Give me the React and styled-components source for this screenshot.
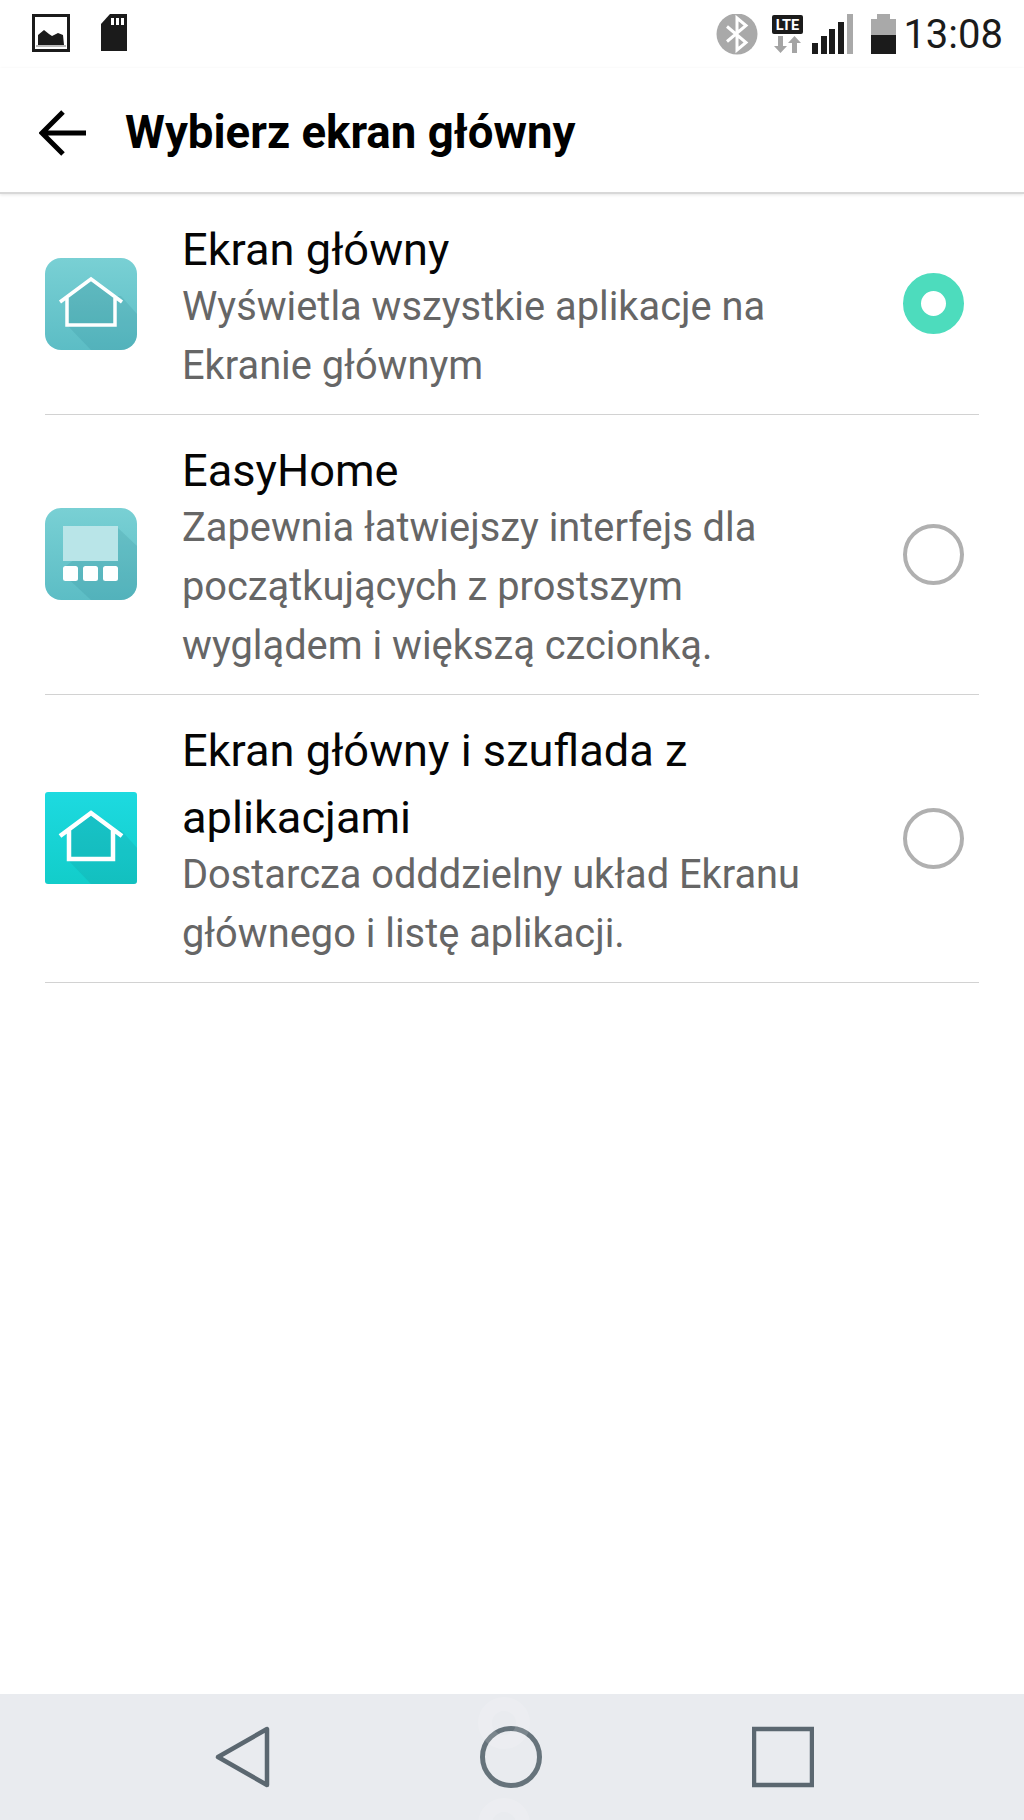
import React from "react";
import styled, { createGlobalStyle } from "styled-components";

const Global = createGlobalStyle`
  html, body { margin: 0; padding: 0; background: #fff; }
  body { font-family: Roboto, "Noto Sans", sans-serif; }
`;
const Screen = styled.div`
  width: 1024px; height: 1820px; display: flex; flex-direction: column; overflow: hidden; background: #fff;
`;
const StatusBar = styled.div`
  height: 68px; flex: none; display: flex; align-items: flex-start; justify-content: space-between;
  padding: 14px 21px 0 32px; box-sizing: border-box;
`;
const StatusGroup = styled.div`display: flex; align-items: flex-start; gap: ${p => p.$gap}px;`;
const Clock = styled.div`font-size: 40px; line-height: 42px; color: #1b1b1b; font-weight: 400; margin-left: -1px;`;
const BatterySlot = styled.div`margin-left: 10px;`;
const LteSlot = styled.div`margin-left: 6px;`;
const Toolbar = styled.div`
  height: 126px; flex: none; display: flex; align-items: center; padding: 5px 0 0 39px; box-sizing: border-box;
  border-bottom: 2px solid #d8d8d8; box-shadow: 0 1px 3px rgba(0,0,0,.1);
`;
const Title = styled.h1`margin: 0 0 0 38px; font-size: 45.6px; font-weight: 700; color: #000; line-height: 54px;`;
const List = styled.div`flex: 1; padding: 0 45px; display: flex; flex-direction: column;`;
const Row = styled.div`
  display: flex; align-items: center; border-bottom: 1px solid #d2d2d2; padding: 22px 15px 19px 0;
`;
const IconSlot = styled.div`width: 92px; height: 92px; flex: none; margin: 0 45px 4px 0;`;
const RowText = styled.div`flex: 1;`;
const RowTitle = styled.div`font-size: 45.2px; line-height: 67px; color: #050505;`;
const RowSub = styled.div`font-size: 39.8px; line-height: 59px; color: #666; margin-top: -6px;`;
const Radio = styled.div`
  width: 61px; height: 61px; border-radius: 50%; box-sizing: border-box; flex: none; margin-bottom: 4px;
  border: ${p => p.$on ? "18px solid #4ddcbd" : "4px solid #b0b0b0"};
  background: #fff;
`;
const NavBar = styled.div`
  height: 126px; flex: none; background: #e9ebef; display: flex; align-items: flex-start; padding: 32px 0 0 4px; box-sizing: border-box;
  position: relative; justify-content: center; gap: 210px;
`;
const Ghost = styled.div`
  position: absolute; left: 478px; width: 52px; height: 52px; box-sizing: border-box;
  border: 14px solid rgba(255,255,255,.14); border-radius: 50%; top: ${p => p.$top}px;
`;

const Ic = ({ w, h, children }) => <svg width={w} height={h} viewBox={`0 0 ${w} ${h}`}>{children}</svg>;

const PictureIcon = () => (
  <Ic w={38} h={38}>
    <rect x="1.5" y="1.5" width="35" height="35" fill="#fff" stroke="#1b1b1b" strokeWidth="3" />
    <rect x="4" y="31.5" width="30" height="1" fill="#777"/>
    <path d="M6 31V21L12 16 17 20 20 22 26 19 31 21 32 31Z" fill="#1b1b1b" />
  </Ic>
);
const SdIcon = () => (
  <Ic w={27} h={38}>
    <path d="M9 0H26V37H0V10Z" fill="#1b1b1b" />
    <rect x="10" y="4" width="3" height="7" fill="#fff" /><rect x="15" y="4" width="3" height="7" fill="#fff" /><rect x="20" y="4" width="3" height="7" fill="#fff" />
  </Ic>
);
const BtIcon = () => (
  <Ic w={42} h={42}>
    <circle cx="21" cy="20" r="20.5" fill="#a9a9a9" />
    <path d="M11 12.5 30 28.5 21 36V4L30 11.5 11 27.5" fill="none" stroke="#fff" strokeWidth="3" />
  </Ic>
);
const LteIcon = () => (
  <Ic w={32} h={40}>
    <rect x="0" y="1" width="31" height="19" rx="2" fill="#1b1b1b" />
    <text x="15.5" y="16" fontFamily="Roboto" fontWeight="700" fontSize="14.5" fill="#fff" textAnchor="middle">LTE</text>
    <path d="M6 22H11V32H15L8.5 39 2 32H6Z" fill="#a4a4a4" />
    <path d="M20 39H25V29H29L22.5 22 16 29H20Z" fill="#a4a4a4" />
  </Ic>
);
const SignalIcon = () => (
  <Ic w={41} h={40}>
    <rect x="0" y="29" width="6" height="11" fill="#1b1b1b" />
    <rect x="9" y="22" width="6" height="18" fill="#1b1b1b" />
    <rect x="17" y="15" width="6" height="25" fill="#1b1b1b" />
    <rect x="26" y="8" width="6" height="32" fill="#1b1b1b" />
    <rect x="35" y="0" width="6" height="40" fill="#a9a9a9" />
  </Ic>
);
const BatteryIcon = () => (
  <Ic w={25} h={40}>
    <rect x="6" y="0" width="13" height="5" fill="#a9a9a9" />
    <rect x="0" y="5" width="25" height="16" fill="#a9a9a9" />
    <rect x="0" y="21" width="25" height="19" fill="#1b1b1b" />
  </Ic>
);
const BackArrow = () => (
  <Ic w={48} h={46}>
    <path d="M47 23H4M24 2 3 23 24 44" fill="none" stroke="#000" strokeWidth="5" />
  </Ic>
);

const AppIcon = ({ kind }) => {
  const id = `g-${kind}`;
  const square = kind === "drawer";
  const top = square ? "#1ddae0" : "#79d0d4";
  const bot = square ? "#12cdca" : "#5cbdc5";
  const r = square ? 3 : 16;
  const wallL = square ? 24 : 22;
  const wallR = square ? 68 : 70;
  return (
    <Ic w={92} h={92}>
      <defs>
        <linearGradient id={id} x1="0" y1="0" x2="0" y2="1"><stop offset="0" stopColor={top} /><stop offset="1" stopColor={bot} /></linearGradient>
        <clipPath id={`${id}c`}><rect width="92" height="92" rx={r} /></clipPath>
      </defs>
      <rect width="92" height="92" rx={r} fill={`url(#${id})`} />
      <g clipPath={`url(#${id}c)`}>
        {kind === "easy" ? (
          <>
            <path d="M73 20 92 38V92H46L18 66V60Z" fill="rgba(30,110,125,.14)" />
            <rect x="18" y="18" width="55" height="35" fill="#b9e5e8" />
            {[18, 38, 58].map(x => <rect key={x} x={x} y="58" width="15" height="15" rx="2.5" fill="#fff" />)}
          </>
        ) : (
          <>
            <path d="M46 20 70 38H76L92 56V92H46L22 67V38Z" fill="rgba(20,110,120,.13)" />
            <path d="M22 38 46 20 70 38V67H22Z" fill="rgba(20,110,120,.07)" />
            <path d={`M15 44 46 21 77 44M${wallL} 38V67H${wallR}V38`} fill="none" stroke="#fff" strokeWidth={square ? 4.5 : 3.5} />
          </>
        )}
      </g>
    </Ic>
  );
};

const NavBack = () => (
  <Ic w={56} h={62}>
    <path d="M53 3V59L4 31Z" fill="none" stroke="#5b6770" strokeWidth="4.5" strokeLinejoin="round" />
  </Ic>
);
const NavHome = () => (
  <Ic w={62} h={62}>
    <circle cx="31" cy="31" r="28.5" fill="none" stroke="#66737b" strokeWidth="5" />
  </Ic>
);
const NavRecent = () => (
  <Ic w={62} h={62}>
    <rect x="2" y="3" width="58" height="56" fill="none" stroke="#5b6770" strokeWidth="4.5" />
  </Ic>
);

const items = [
  { kind: "home", title: "Ekran główny", sub: <>Wyświetla wszystkie aplikacje na<br />Ekranie głównym</>, on: true },
  { kind: "easy", title: "EasyHome", sub: <>Zapewnia łatwiejszy interfejs dla<br />początkujących z prostszym<br />wyglądem i większą czcionką.</> },
  { kind: "drawer", title: <>Ekran główny i szuflada z<br />aplikacjami</>, sub: <>Dostarcza odddzielny układ Ekranu<br />głównego i listę aplikacji.</> },
];

export default function App() {
  return (
    <Screen>
      <Global />
      <StatusBar>
        <StatusGroup $gap={31}><PictureIcon /><SdIcon /></StatusGroup>
        <StatusGroup $gap={8}>
          <BtIcon />
          <LteSlot><LteIcon /></LteSlot>
          <SignalIcon />
          <BatterySlot><BatteryIcon /></BatterySlot>
          <Clock>13:08</Clock>
        </StatusGroup>
      </StatusBar>
      <Toolbar>
        <BackArrow />
        <Title>Wybierz ekran główny</Title>
      </Toolbar>
      <List>
        {items.map(it => (
          <Row key={it.kind}>
            <IconSlot><AppIcon kind={it.kind} /></IconSlot>
            <RowText>
              <RowTitle>{it.title}</RowTitle>
              <RowSub>{it.sub}</RowSub>
            </RowText>
            <Radio $on={it.on} />
          </Row>
        ))}
      </List>
      <NavBar>
        <Ghost $top={3} />
        <Ghost $top={104} />
        <NavBack /><NavHome /><NavRecent />
      </NavBar>
    </Screen>
  );
}
